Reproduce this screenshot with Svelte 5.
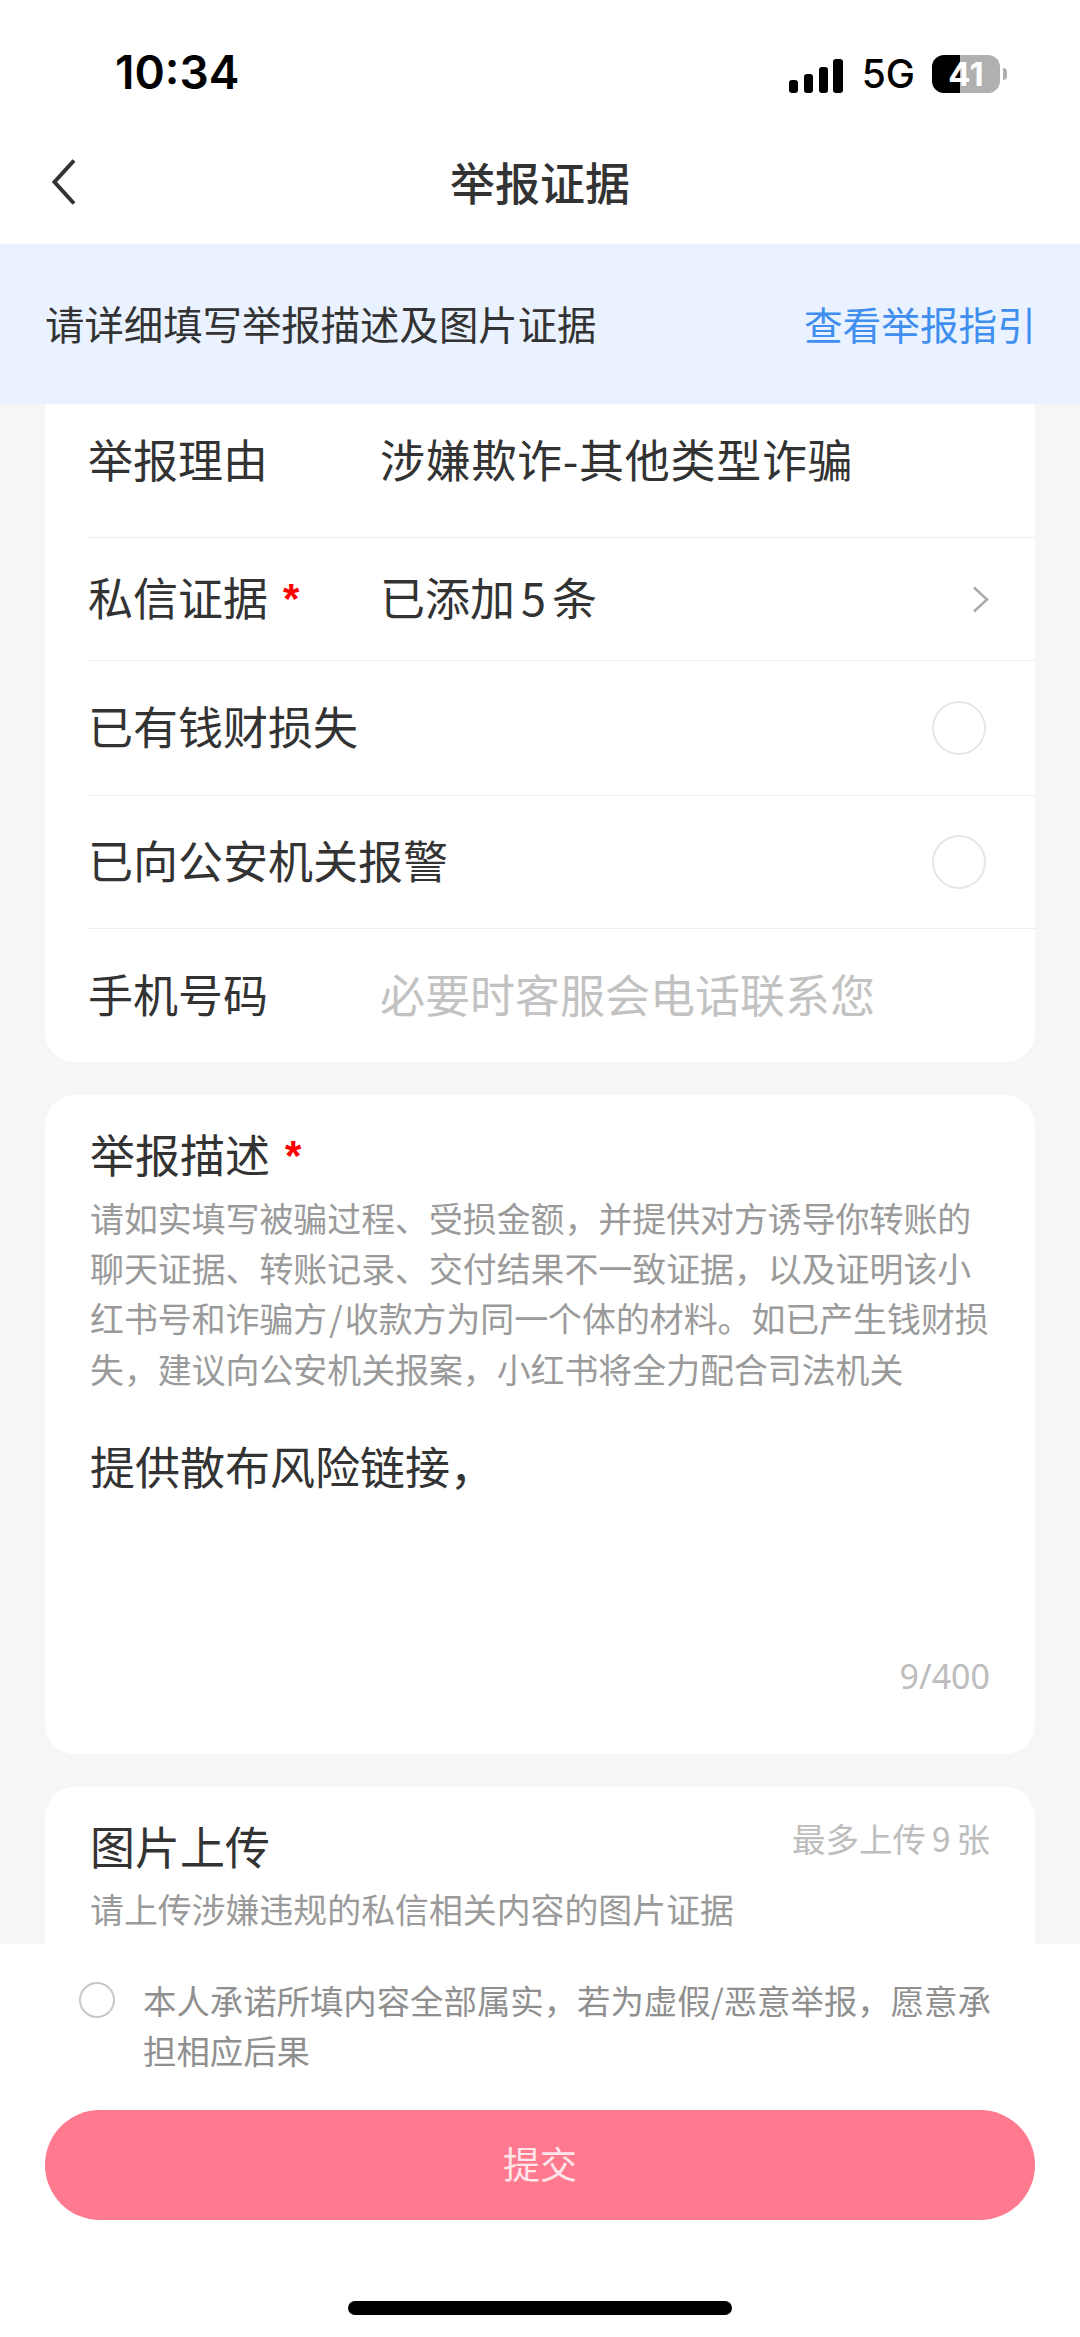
<script>
    const helpLines = [
        '请如实填写被骗过程、受损金额\uFF0C并提供对方诱导你转账的',
        '聊天证据、转账记录、交付结果不一致证据\uFF0C以及证明该小',
        '红书号和诈骗方\u200A/\u200A收款方为同一个体的材料。如已产生钱财损',
        '失\uFF0C建议向公安机关报案\uFF0C小红书将全力配合司法机关'
    ];
</script>

<div class="page">
    <div class="status-bar">
        <span class="time">10:34</span>
        <div class="status-icons">
            <svg class="signal" width="54" height="34" viewBox="0 0 54 34">
                <rect x="0" y="21" width="9" height="13" rx="3" />
                <rect x="15" y="15" width="9" height="19" rx="3" />
                <rect x="30" y="8" width="9" height="26" rx="3" />
                <rect x="44" y="0" width="10" height="34" rx="3" />
            </svg>
            <span class="net">5G</span>
            <div class="battery"><span>41</span></div>
            <div class="battery-nub"></div>
        </div>
    </div>

    <div class="nav">
        <svg class="back" width="24" height="46" viewBox="0 0 24 46">
            <path d="M22 1.5 L2.5 23 L22 44.5" />
        </svg>
        <div class="nav-title">举报证据</div>
        <div></div>
    </div>

    <div class="banner">
        <span class="tip">请详细填写举报描述及图片证据</span>
        <span class="guide">查看举报指引</span>
    </div>

    <div class="content">
        <div class="card info-card">
            <div class="row first">
                <span class="label fixed">举报理由</span>
                <span class="value">涉嫌欺诈-其他类型诈骗</span>
            </div>
            <div class="row evidence">
                <span class="label fixed">私信证据<i class="star">*</i></span>
                <span class="value">已添加<span class="num">5</span>条</span>
                <svg class="chevron" width="17" height="27" viewBox="0 0 17 27">
                    <path d="M2 1.5 L15 13.5 L2 25.5" />
                </svg>
            </div>
            <div class="row loss">
                <span class="label">已有钱财损失</span>
                <span class="radio"></span>
            </div>
            <div class="row police">
                <span class="label">已向公安机关报警</span>
                <span class="radio"></span>
            </div>
            <div class="row phone">
                <span class="label fixed">手机号码</span>
                <span class="value placeholder">必要时客服会电话联系您</span>
            </div>
        </div>

        <div class="card desc-card">
            <div class="label title">举报描述<i class="star">*</i></div>
            <div class="help">
                {#each helpLines as line}
                    <div>{line}</div>
                {/each}
            </div>
            <div class="desc-text">提供散布风险链接&#65292;</div>
            <div class="count">9/400</div>
        </div>

        <div class="card upload-card">
            <div class="upload-head">
                <span class="label">图片上传</span>
                <span class="limit">最多上传<span class="num">9</span>张</span>
            </div>
            <div class="upload-help">请上传涉嫌违规的私信相关内容的图片证据</div>
        </div>
    </div>

    <div class="footer">
        <div class="promise">
            <span class="promise-radio"></span>
            <div class="promise-text">本人承诺所填内容全部属实&#65292;若为虚假/恶意举报&#65292;愿意承担相应后果</div>
        </div>
        <div class="submit"><span>提交</span></div>
        <div class="home-bar"></div>
    </div>
</div>

<style>
    :global(body) {
        margin: 0;
    }

    .page {
        width: 1080px;
        height: 2337px;
        display: flex;
        flex-direction: column;
        overflow: hidden;
        background: #f6f6f6;
        color: #333;
        font-family: "Noto Sans CJK SC", "Noto Sans", sans-serif;
    }

    .status-bar {
        height: 120px;
        box-sizing: border-box;
        padding: 45px 73px 0 115px;
        display: flex;
        justify-content: space-between;
        align-items: flex-start;
        background: #fff;
    }

    .time {
        font-family: Inter, sans-serif;
        font-size: 46px;
        font-weight: 600;
        line-height: 54px;
        color: #000;
    }

    .status-icons {
        display: flex;
        align-items: center;
        height: 48px;
        margin-top: 5px;
    }

    .signal {
        fill: #000;
        margin-top: 3px;
    }

    .net {
        margin-left: 19px;
        font-family: Inter, sans-serif;
        font-size: 39px;
        font-weight: 500;
        line-height: 48px;
        color: #000;
    }

    .battery {
        margin-left: 17px;
        width: 68px;
        height: 38px;
        border-radius: 12px;
        background: linear-gradient(90deg, #000 41%, #b0b0b0 41%);
        display: flex;
        align-items: center;
        justify-content: center;
        color: #fff;
        font-family: Inter, sans-serif;
        font-size: 33px;
        font-weight: 700;
        line-height: 38px;
    }

    .battery-nub {
        width: 4px;
        height: 12px;
        margin-left: 3px;
        border-radius: 0 6px 6px 0;
        background: #b0b0b0;
    }

    .nav {
        height: 124px;
        display: grid;
        grid-template-columns: 1fr auto 1fr;
        align-items: center;
        padding: 0 0 0 52px;
        background: #fff;
    }

    .back {
        fill: none;
        stroke: #333;
        stroke-width: 4;
    }

    .nav-title {
        font-size: 45px;
        font-weight: 500;
        line-height: 60px;
        margin-right: 52px;
    }

    .banner {
        height: 160px;
        flex-shrink: 0;
        box-sizing: border-box;
        padding: 0 44px 3px 45px;
        display: flex;
        justify-content: space-between;
        align-items: center;
        background: #eaf2ff;
        line-height: 54px;
    }

    .tip {
        font-size: 39.4px;
    }

    .guide {
        font-size: 38.7px;
        color: #3f8ef0;
    }

    .content {
        flex: 1;
        min-height: 0;
        overflow: hidden;
        padding: 0 45px;
        display: flex;
        flex-direction: column;
        gap: 33px;
    }

    .card {
        flex-shrink: 0;
        background: #fff;
        border-radius: 30px;
    }

    .info-card {
        border-radius: 0 0 30px 30px;
        padding-left: 43px;
    }

    .row {
        display: flex;
        align-items: center;
        padding-right: 43px;
        border-bottom: 1px solid #eee;
        box-sizing: border-box;
    }

    .row.first {
        height: 134px;
        padding-bottom: 20px;
    }

    .row.evidence {
        height: 123px;
    }

    .row.loss {
        height: 135px;
    }

    .row.police {
        height: 133px;
    }

    .row.phone {
        height: 133px;
        border-bottom: 0;
    }

    .label {
        font-size: 45px;
        line-height: 60px;
        padding-bottom: 4px;
    }

    .evidence .label {
        padding-bottom: 2px;
    }

    .label.fixed {
        flex: 0 0 292px;
    }

    .star {
        margin-left: 15px;
        font-family: "Liberation Sans", sans-serif;
        font-size: 42px;
        font-style: normal;
        font-weight: 700;
        color: #f00;
        vertical-align: 3px;
    }

    .value {
        flex: 1;
        font-size: 45px;
        line-height: 60px;
        padding-bottom: 4px;
    }

    .first .value {
        letter-spacing: 0.7px;
    }

    .num {
        margin: 0 6px;
    }

    .placeholder {
        color: #c2c2c2;
    }

    .chevron {
        fill: none;
        stroke: #aaa;
        stroke-width: 2.5;
        margin-right: 3px;
    }

    .radio {
        width: 54px;
        height: 54px;
        box-sizing: border-box;
        margin-left: auto;
        margin-right: 6px;
        border: 2px solid #e6e6e6;
        border-radius: 50%;
    }

    .desc-card {
        height: 659px;
        box-sizing: border-box;
        padding: 29px 47px 0 45px;
        display: flex;
        flex-direction: column;
    }

    .help {
        margin-top: 3px;
        font-size: 33.9px;
        line-height: 50.2px;
        color: #9a9a9a;
        white-space: nowrap;
    }

    .desc-text {
        margin-top: 42px;
        font-size: 45px;
        line-height: 60px;
    }

    .count {
        margin-top: auto;
        margin-bottom: 58px;
        margin-right: -2px;
        align-self: flex-end;
        font-family: "Noto Sans", sans-serif;
        font-size: 34px;
        line-height: 40px;
        color: #bdbdbd;
    }

    .upload-card {
        height: 300px;
        padding: 29px 47px 0 45px;
    }

    .upload-head {
        display: flex;
        justify-content: space-between;
        align-items: flex-start;
    }

    .limit {
        margin-right: -2px;
        font-size: 33.5px;
        line-height: 44px;
        color: #bdbdbd;
    }

    .upload-help {
        margin-top: 7px;
        font-size: 33.9px;
        line-height: 44px;
        color: #9a9a9a;
    }

    .footer {
        height: 393px;
        flex-shrink: 0;
        box-sizing: border-box;
        position: relative;
        padding: 34px 45px 0;
        background: #fff;
    }

    .promise {
        display: flex;
        align-items: flex-start;
        padding: 0 30px 0 34px;
    }

    .promise-radio {
        width: 36px;
        height: 36px;
        flex-shrink: 0;
        box-sizing: border-box;
        margin: 4px 28px 0 0;
        border: 2px solid #c8c8c8;
        border-radius: 50%;
    }

    .promise-text {
        margin-top: -3px;
        font-size: 33.4px;
        line-height: 50px;
        color: #8f8f8f;
    }

    .submit {
        height: 110px;
        margin-top: 35px;
        border-radius: 55px;
        display: flex;
        align-items: center;
        justify-content: center;
        background: #ff7a8f;
        color: #ffe6ea;
        font-size: 37px;
    }

    .submit span {
        margin-bottom: 4px;
    }

    .home-bar {
        position: absolute;
        left: 348px;
        bottom: 22px;
        width: 384px;
        height: 14px;
        border-radius: 7px;
        background: #000;
    }
</style>
